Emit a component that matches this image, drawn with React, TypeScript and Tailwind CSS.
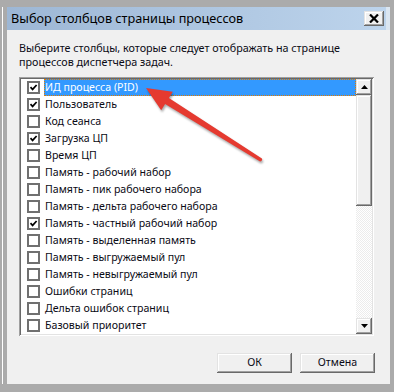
import React from "react";

const items: [string, boolean][] = [
  ["ИД процесса (PID)", true],
  ["Пользователь", true],
  ["Код сеанса", false],
  ["Загрузка ЦП", true],
  ["Время ЦП", false],
  ["Память - рабочий набор", false],
  ["Память - пик рабочего набора", false],
  ["Память - дельта рабочего набора", false],
  ["Память - частный рабочий набор", true],
  ["Память - выделенная память", false],
  ["Память - выгружаемый пул", false],
  ["Память - невыгружаемый пул", false],
  ["Ошибки страниц", false],
  ["Дельта ошибок страниц", false],
  ["Базовый приоритет", false],
];

const raised =
  "shadow-[inset_-1px_-1px_0_#696969,inset_1px_1px_0_#e3e3e3,inset_-2px_-2px_0_#a0a0a0,inset_2px_2px_0_#ffffff]";

function Check({ on }: { on: boolean }) {
  return (
    <div className="w-[13px] h-[13px] border-2 border-[#707070] bg-white flex items-center justify-center shrink-0">
      {on && (
        <svg width="9" height="9" viewBox="0 0 9 9">
          <path d="M1.5 4.2 L3.6 6.4 L7.6 2" stroke="#000" strokeWidth="1.7" fill="none" />
        </svg>
      )}
    </div>
  );
}

function Tri({ up }: { up: boolean }) {
  return (
    <svg width="7" height="4" viewBox="0 0 7 4">
      <path d={up ? "M0 4 L7 4 L3.5 0 Z" : "M0 0 L7 0 L3.5 4 Z"} fill="#000" />
    </svg>
  );
}

export default function App() {
  return (
    <div className="relative w-[394px] h-[392px] bg-[#ababab] pl-[2px] pt-[7px] pr-[4px] pb-[8px] font-['Noto_Sans'] text-[10.6px] text-[#0a0a14] overflow-hidden">
      <div className="h-full border-l border-white pl-[4px]">
        <div className="h-full flex flex-col bg-[#f0f0f0]">
          {/* title bar */}
          <div className="h-[23px] flex items-center bg-[#dbe6f1] shrink-0">
            <div className="h-full flex-1 flex items-center justify-between bg-gradient-to-r from-[#9db7d5] to-[#bdd4ec] pl-[4px] pr-[2px] mr-[4px]">
              <span className="text-[12.7px] leading-none whitespace-nowrap text-black">Выбор столбцов страницы процессов</span>
              <div className={`w-[20px] h-[15px] bg-[#f0f0f0] flex items-center justify-center ${raised}`}>
                <svg width="10" height="9" viewBox="0 0 10 9">
                  <path d="M1 0.5 L9 8.5 M9 0.5 L1 8.5" stroke="#000" strokeWidth="2.2" />
                </svg>
              </div>
            </div>
          </div>
          {/* client */}
          <div className="flex-1 flex flex-col pl-[12px] pr-[15px] pt-[11px]">
            <div className="leading-[14px] h-[28px] whitespace-nowrap text-[10.75px]">
              Выберите столбцы, которые следует отображать на странице
              <br />
              процессов диспетчера задач.
            </div>
            <div className="mt-[8px] w-[355px] h-[259px] bg-white p-[2px] flex shadow-[inset_1px_1px_0_#a0a0a0,inset_-1px_-1px_0_#ffffff,inset_2px_2px_0_#696969,inset_-2px_-2px_0_#e3e3e3]">
              <div className="flex-1 flex flex-col">
                {items.map(([label, on], i) => (
                  <div key={i} className="h-[17px] flex items-center pl-[6px]">
                    <Check on={on} />
                    <div
                      className={
                        i === 0
                          ? "ml-[4px] flex-1 h-[17px] flex items-center pl-[1px] whitespace-nowrap bg-[#3399ff] text-white outline outline-1 outline-dotted outline-[#e07b00] -outline-offset-1"
                          : "ml-[4px] flex-1 h-[17px] flex items-center pl-[1px] whitespace-nowrap"
                      }
                    >
                      {label}
                    </div>
                  </div>
                ))}
              </div>
              <div className="w-[16px] flex flex-col">
                <div className={`h-[16px] bg-[#f0f0f0] flex items-center justify-center ${raised}`}>
                  <Tri up />
                </div>
                <div className={`h-[111px] bg-[#f0f0f0] ${raised}`} />
                <div className="flex-1 bg-[repeating-conic-gradient(#ffffff_0%_25%,#ececec_0%_50%)] bg-[length:2px_2px]" />
                <div className={`h-[16px] bg-[#f0f0f0] flex items-center justify-center ${raised}`}>
                  <Tri up={false} />
                </div>
              </div>
            </div>
            <div className="mt-[17px] flex justify-end gap-[8px]">
              <div className={`w-[75px] h-[20px] bg-[#f0f0f0] flex items-center justify-center ${raised}`}>ОК</div>
              <div className={`w-[75px] h-[20px] bg-[#f0f0f0] flex items-center justify-center ${raised}`}>Отмена</div>
            </div>
          </div>
        </div>
      </div>
      {/* red arrow overlay */}
      <svg
        className="absolute left-0 top-0 pointer-events-none"
        width="394"
        height="392"
        viewBox="0 0 394 392"
        style={{ filter: "drop-shadow(1px 2px 1px rgba(0,0,0,0.35))" }}
      >
        <path
          d="M146 88 L172.8 91.7 L168.9 98 L261.9 158.5 Q263 160.5 260.1 161.5 L165.1 104 L161.2 110.3 Z"
          fill="#e53a30"
        />
      </svg>
    </div>
  );
}
